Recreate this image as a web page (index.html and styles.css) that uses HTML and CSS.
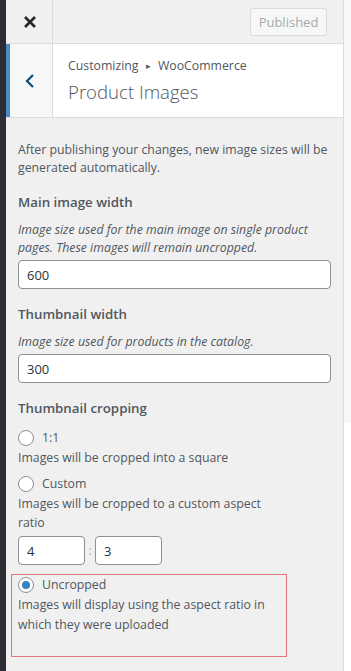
FILE: index.html
```html
<!DOCTYPE html>
<html>
<head>
<meta charset="utf-8">
<link rel="stylesheet" href="styles.css">
</head>
<body>
<div class="strip"></div>
<div class="sidebar">
  <div class="header">
    <div class="close">
      <svg width="14" height="14" viewBox="0 0 14 14"><path d="M2 2 L12 12 M12 2 L2 12" stroke="#23282d" stroke-width="2.6" stroke-linecap="butt"/></svg>
    </div>
    <div class="spacer"></div>
    <div class="published">Published</div>
  </div>
  <div class="section-head">
    <div class="back">
      <svg width="12" height="16" viewBox="0 0 12 16"><path d="M9 2 L3 8 L9 14" fill="none" stroke="#0a4b78" stroke-width="2.2"/></svg>
    </div>
    <div class="titles">
      <div class="crumbs">Customizing <span class="arrow">▸</span> WooCommerce</div>
      <div class="title">Product Images</div>
    </div>
  </div>
  <div class="content">
    <p class="intro">After publishing your changes, new image sizes will be generated automatically.</p>

    <div class="field">
      <div class="label">Main image width</div>
      <div class="desc">Image size used for the main image on single product pages. These images will remain uncropped.</div>
      <div class="input">600</div>
    </div>

    <div class="field">
      <div class="label">Thumbnail width</div>
      <div class="desc">Image size used for products in the catalog.</div>
      <div class="input">300</div>
    </div>

    <div class="field">
      <div class="label crop">Thumbnail cropping</div>
      <div class="option">
        <div class="radio-row"><span class="radio"></span><span>1:1</span></div>
        <div class="opt-desc">Images will be cropped into a square</div>
      </div>
      <div class="option">
        <div class="radio-row"><span class="radio"></span><span>Custom</span></div>
        <div class="opt-desc">Images will be cropped to a custom aspect ratio</div>
        <div class="ratio">
          <div class="input small">4</div>
          <span class="colon">:</span>
          <div class="input small">3</div>
        </div>
      </div>
      <div class="option highlight">
        <div class="radio-row"><span class="radio checked"></span><span>Uncropped</span></div>
        <div class="opt-desc">Images will display using the aspect ratio in which they were uploaded</div>
      </div>
    </div>
  </div>
</div>
<div class="preview">
  <div class="preview-top"></div>
</div>
</body>
</html>
```
FILE: styles.css
```css
html, body {
  margin: 0;
  padding: 0;
}
body {
  width: 351px;
  height: 671px;
  display: flex;
  overflow: hidden;
  font-family: "Open Sans", "Noto Sans", sans-serif;
  font-size: 12.3px;
  color: #50575e;
  background: #fff;
}
.strip {
  width: 6px;
  background: #2c2d33;
  flex: none;
}
.sidebar {
  width: 337px;
  flex: none;
  background: #f0f0f0;
  border-right: 1px solid #dcdcde;
  display: flex;
  flex-direction: column;
}
.header {
  height: 43px;
  border-bottom: 1px solid #dcdcde;
  background: #f0f0f0;
  display: flex;
  align-items: center;
}
.close {
  width: 47px;
  height: 43px;
  border-right: 1px solid #dcdcde;
  display: flex;
  align-items: center;
  justify-content: center;
  box-sizing: border-box;
  padding-left: 1px;
}
.spacer { flex: 1; }
.published {
  width: 77px;
  height: 28px;
  box-sizing: border-box;
  border: 1px solid #dcdcde;
  border-radius: 3px;
  background: #f6f7f7;
  color: #a7aaad;
  font-size: 13px;
  display: flex;
  align-items: center;
  justify-content: center;
  margin-right: 16px;
}
.section-head {
  height: 73px;
  background: #fff;
  border-bottom: 1px solid #dcdcde;
  display: flex;
}
.back {
  width: 47px;
  box-sizing: border-box;
  border-left: 4px solid #4a8bc6;
  border-right: 1px solid #dcdcde;
  background: #f6f7f7;
  display: flex;
  align-items: center;
  justify-content: center;
  padding-right: 2px;
}
.titles {
  padding: 13px 0 0 15px;
  color: #50575e;
}
.crumbs {
  font-size: 12.3px;
  line-height: 18px;
}
.arrow {
  font-size: 9px;
  padding: 0 4px;
  vertical-align: 1px;
}
.title {
  font-size: 18.6px;
  font-weight: 300;
  line-height: 28px;
  margin-top: 3px;
}
.content {
  padding: 23px 12px 0 12px;
}
.intro {
  margin: 0;
  line-height: 17.5px;
}
.field {
  margin-top: 16px;
}
.field + .field { margin-top: 15px; }
.label {
  font-size: 13.3px;
  font-weight: 600;
  line-height: 20px;
  margin-bottom: 9px;
}
.label.crop {
  margin-bottom: 10px;
}
.desc {
  font-style: italic;
  line-height: 18px;
  margin-bottom: 3px;
}
.input {
  height: 29px;
  box-sizing: border-box;
  border: 1px solid #8c8f94;
  border-radius: 4px;
  background: #fff;
  color: #2c3338;
  font-size: 13px;
  padding: 0 8px;
  display: flex;
  align-items: center;
}
.option {
  width: 262px;
  margin-top: 6px;
}
.radio-row {
  display: flex;
  align-items: center;
  gap: 8px;
  line-height: 20px;
}
.radio {
  width: 16px;
  height: 16px;
  box-sizing: border-box;
  border: 1px solid #8c8f94;
  border-radius: 50%;
  background: #fff;
  display: flex;
  align-items: center;
  justify-content: center;
}
.radio.checked::after {
  content: "";
  width: 8px;
  height: 8px;
  border-radius: 50%;
  background: #3582c4;
}
.opt-desc {
  line-height: 19.5px;
}
.ratio {
  display: flex;
  align-items: center;
  margin-top: 3.5px;
}
.input.small {
  width: 67px;
}
.colon {
  width: 10px;
  text-align: center;
  color: #a7aaad;
}
.option.highlight {
  margin: 9px 0 0 -7px;
  padding: 0 6px 22px 6px;
  border: 1px solid #e0777d;
}
.preview {
  flex: 1;
  background: #fff;
}
.preview-top {
  height: 423px;
  background: #f6f7f7;
}
```
